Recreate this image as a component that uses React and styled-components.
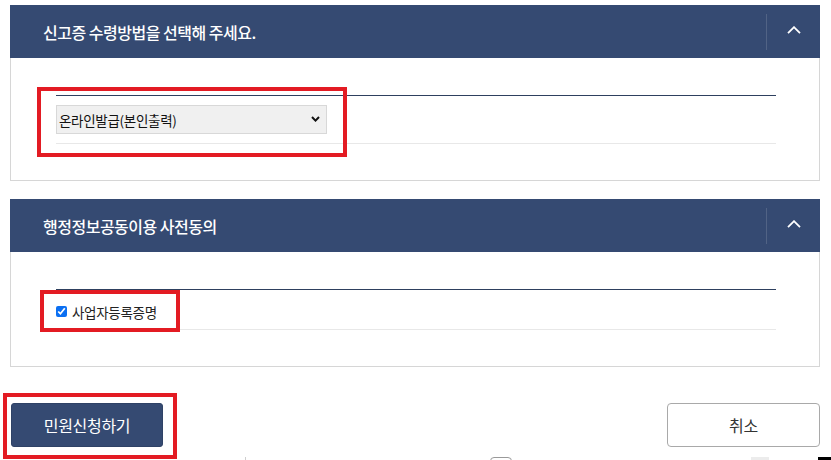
import React from "react";
import styled, { createGlobalStyle } from "styled-components";

const Global = createGlobalStyle`
  html, body { margin: 0; padding: 0; background: #fff; height: 460px; overflow: hidden; }
  body { font-family: "Noto Sans CJK KR", "Noto Sans", sans-serif; color: #222; }
  * { box-sizing: border-box; }
`;

const Page = styled.div`
  width: 831px;
  padding: 5px 11px 0 10px;
`;

const Panel = styled.section`
  width: 810px;
  margin-bottom: ${(p) => (p.$last ? "0" : "18px")};
`;

const Header = styled.div`
  height: 53px;
  background: #354a72;
  display: flex;
  align-items: center;
  padding-left: 33px;
`;

const Title = styled.h2`
  flex: 1;
  margin: 0;
  color: #fff;
  font-size: 16px;
  font-weight: 500;
  letter-spacing: -0.5px;
  line-height: 20px;
`;

const Toggle = styled.button`
  width: 54px;
  height: 36px;
  border: none;
  border-left: 1px solid rgba(255, 255, 255, 0.14);
  background: transparent;
  display: flex;
  align-items: center;
  justify-content: center;
  padding: 0;
  padding-bottom: 3px;
  cursor: pointer;
`;

const Body = styled.div`
  position: relative;
  border: 1px solid #d6d6d6;
  border-top: none;
  padding: 37px 43px 36px 45px;
`;

const FieldRow = styled.div`
  border-top: 1px solid #2e405f;
  border-bottom: 1px solid #e8e8e8;
  display: flex;
  align-items: center;
  height: ${(p) => p.$h}px;
  padding-top: ${(p) => p.$pt || 0}px;
`;

const SelectWrap = styled.div`
  position: relative;
  width: 271px;
  height: 29px;
`;

const Select = styled.select`
  appearance: none;
  -webkit-appearance: none;
  width: 100%;
  height: 100%;
  border: 1px solid #d8d8d8;
  background: #f0f0f0;
  border-radius: 0;
  padding: 0 0 0 2px;
  font-family: "Noto Sans CJK KR", "Noto Sans", sans-serif;
  font-size: 13.5px;
  letter-spacing: -0.3px;
  color: #111;
  outline: none;
`;

const SelectArrow = styled.svg`
  position: absolute;
  right: 7px;
  top: 11px;
  pointer-events: none;
`;

const CheckLabel = styled.label`
  display: flex;
  align-items: center;
  gap: 5px;
  font-size: 13.5px;
  letter-spacing: -0.3px;
  color: #222;
`;

const Check = styled.input`
  margin: 0;
  width: 11px;
  height: 11px;
  accent-color: #0b6ff2;
`;

const Annot = styled.div`
  position: absolute;
  border: 4px solid #e31b23;
  pointer-events: none;
  left: ${(p) => p.$l}px;
  top: ${(p) => p.$t}px;
  width: ${(p) => p.$w}px;
  height: ${(p) => p.$h}px;
`;

const ButtonRow = styled.div`
  position: relative;
  display: flex;
  align-items: center;
  justify-content: space-between;
  margin-top: 36px;
  padding-left: 1px;
`;

const Btn = styled.button`
  width: ${(p) => (p.$primary ? "152px" : "153px")};
  height: 44px;
  border-radius: ${(p) => (p.$primary ? "3px" : "4px")};
  border: 1px solid ${(p) => (p.$primary ? "#2f4266" : "#a9a9a9")};
  background: ${(p) => (p.$primary ? "#354a72" : "#fff")};
  color: ${(p) => (p.$primary ? "#fff" : "#333")};
  font-family: "Noto Sans CJK KR", "Noto Sans", sans-serif;
  font-size: 16px;
  letter-spacing: -0.3px;
  padding: 0;
  cursor: pointer;
`;

const FooterStrip = styled.div`
  display: flex;
  align-items: flex-start;
  margin: 10px 0 0 -10px;
  width: 831px;
  height: 6px;
  overflow: hidden;
`;

const Frag = styled.div`
  flex: none;
  margin-left: ${(p) => p.$ml}px;
  width: ${(p) => p.$w}px;
  height: 6px;
  background: ${(p) => p.$bg || "transparent"};
  border: ${(p) => p.$border || "none"};
  border-radius: ${(p) => p.$r || 0};
`;

const ChevronUp = () => (
  <svg width="14" height="8" viewBox="0 0 14 8" fill="none">
    <path d="M1 7.2 L7 1.2 L13 7.2" stroke="#fff" strokeWidth="1.8" />
  </svg>
);

export default function App() {
  return (
    <>
      <Global />
      <Page>
        <Panel>
          <Header>
            <Title>신고증 수령방법을 선택해 주세요.</Title>
            <Toggle aria-label="접기">
              <ChevronUp />
            </Toggle>
          </Header>
          <Body>
            <FieldRow $h={49}>
              <SelectWrap>
                <Select defaultValue="online">
                  <option value="online">온라인발급(본인출력)</option>
                </Select>
                <SelectArrow width="9" height="6" viewBox="0 0 9 6">
                  <path d="M1 1 L4.5 4.6 L8 1" stroke="#111" strokeWidth="2" fill="none" />
                </SelectArrow>
              </SelectWrap>
            </FieldRow>
            <Annot $l={26} $t={29} $w={310} $h={70} />
          </Body>
        </Panel>

        <Panel $last>
          <Header>
            <Title>행정정보공동이용 사전동의</Title>
            <Toggle aria-label="접기">
              <ChevronUp />
            </Toggle>
          </Header>
          <Body>
            <FieldRow $h={41} $pt={4}>
              <CheckLabel>
                <Check type="checkbox" defaultChecked />
                사업자등록증명
              </CheckLabel>
            </FieldRow>
            <Annot $l={29} $t={38} $w={140} $h={42} />
          </Body>
        </Panel>

        <ButtonRow>
          <Btn $primary>민원신청하기</Btn>
          <Btn>취소</Btn>
          <Annot $l={-7} $t={-10} $w={174} $h={66} />
        </ButtonRow>

        <FooterStrip>
          <Frag $ml={245} $w={1} $bg="#cfcfcf" />
          <Frag $ml={244} $w={22} $border="1px solid #9a9a9a" $r="4px 4px 0 0" />
          <Frag $ml={239} $w={18} $bg="#ececec" />
          <Frag $ml={49} $w={14} $bg="#000" />
        </FooterStrip>
      </Page>
    </>
  );
}
